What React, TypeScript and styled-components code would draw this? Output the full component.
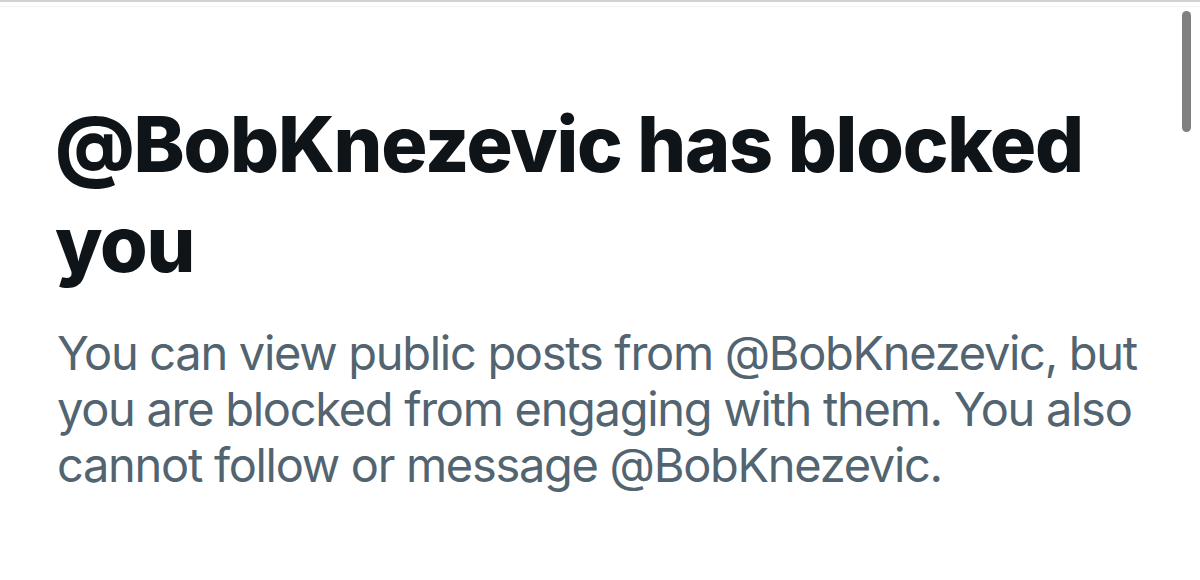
import React from "react";
import styled, { createGlobalStyle } from "styled-components";

const Global = createGlobalStyle`
  html, body { margin: 0; padding: 0; background: #ffffff; }
  body { font-family: Inter, "Noto Sans", sans-serif; }
`;

const Page = styled.div`
  position: relative;
  width: 1200px;
  height: 580px;
  overflow: hidden;
  background: #ffffff;
  border-top: 2px solid #cfd3d6;
  box-sizing: border-box;
`;

const Hairline = styled.div`
  height: 1px;
  margin-top: 4px;
  background: #f3f4f5;
`;

const Content = styled.main`
  display: flex;
  flex-direction: column;
  gap: 31px;
  padding: 87px 0 0 55px;
`;

const Title = styled.h1`
  margin: 0;
  font-family: Inter, "Noto Sans", sans-serif;
  font-weight: 800;
  font-size: 77px;
  line-height: 100px;
  letter-spacing: -1.2px;
  white-space: nowrap;
  color: #0f1419;
`;

const Body = styled.p`
  margin: 0;
  padding-left: 2px;
  font-family: Inter, "Noto Sans", sans-serif;
  font-weight: 400;
  font-size: 47px;
  line-height: 56px;
  letter-spacing: -1.3px;
  white-space: nowrap;
  color: #536471;
`;

const Scrollbar = styled.div`
  position: absolute;
  top: 9px;
  left: 1182px;
  width: 9px;
  height: 121px;
  border-radius: 5px;
  background: #808080;
`;

export default function App() {
  return (
    <>
      <Global />
      <Page>
        <Hairline />
        <Content>
          <Title>
            @BobKnezevic has blocked
            <br />
            you
          </Title>
          <Body>
            You can view public posts from @BobKnezevic, but
            <br />
            you are blocked from engaging with them. You also
            <br />
            cannot follow or message @BobKnezevic.
          </Body>
        </Content>
        <Scrollbar />
      </Page>
    </>
  );
}
